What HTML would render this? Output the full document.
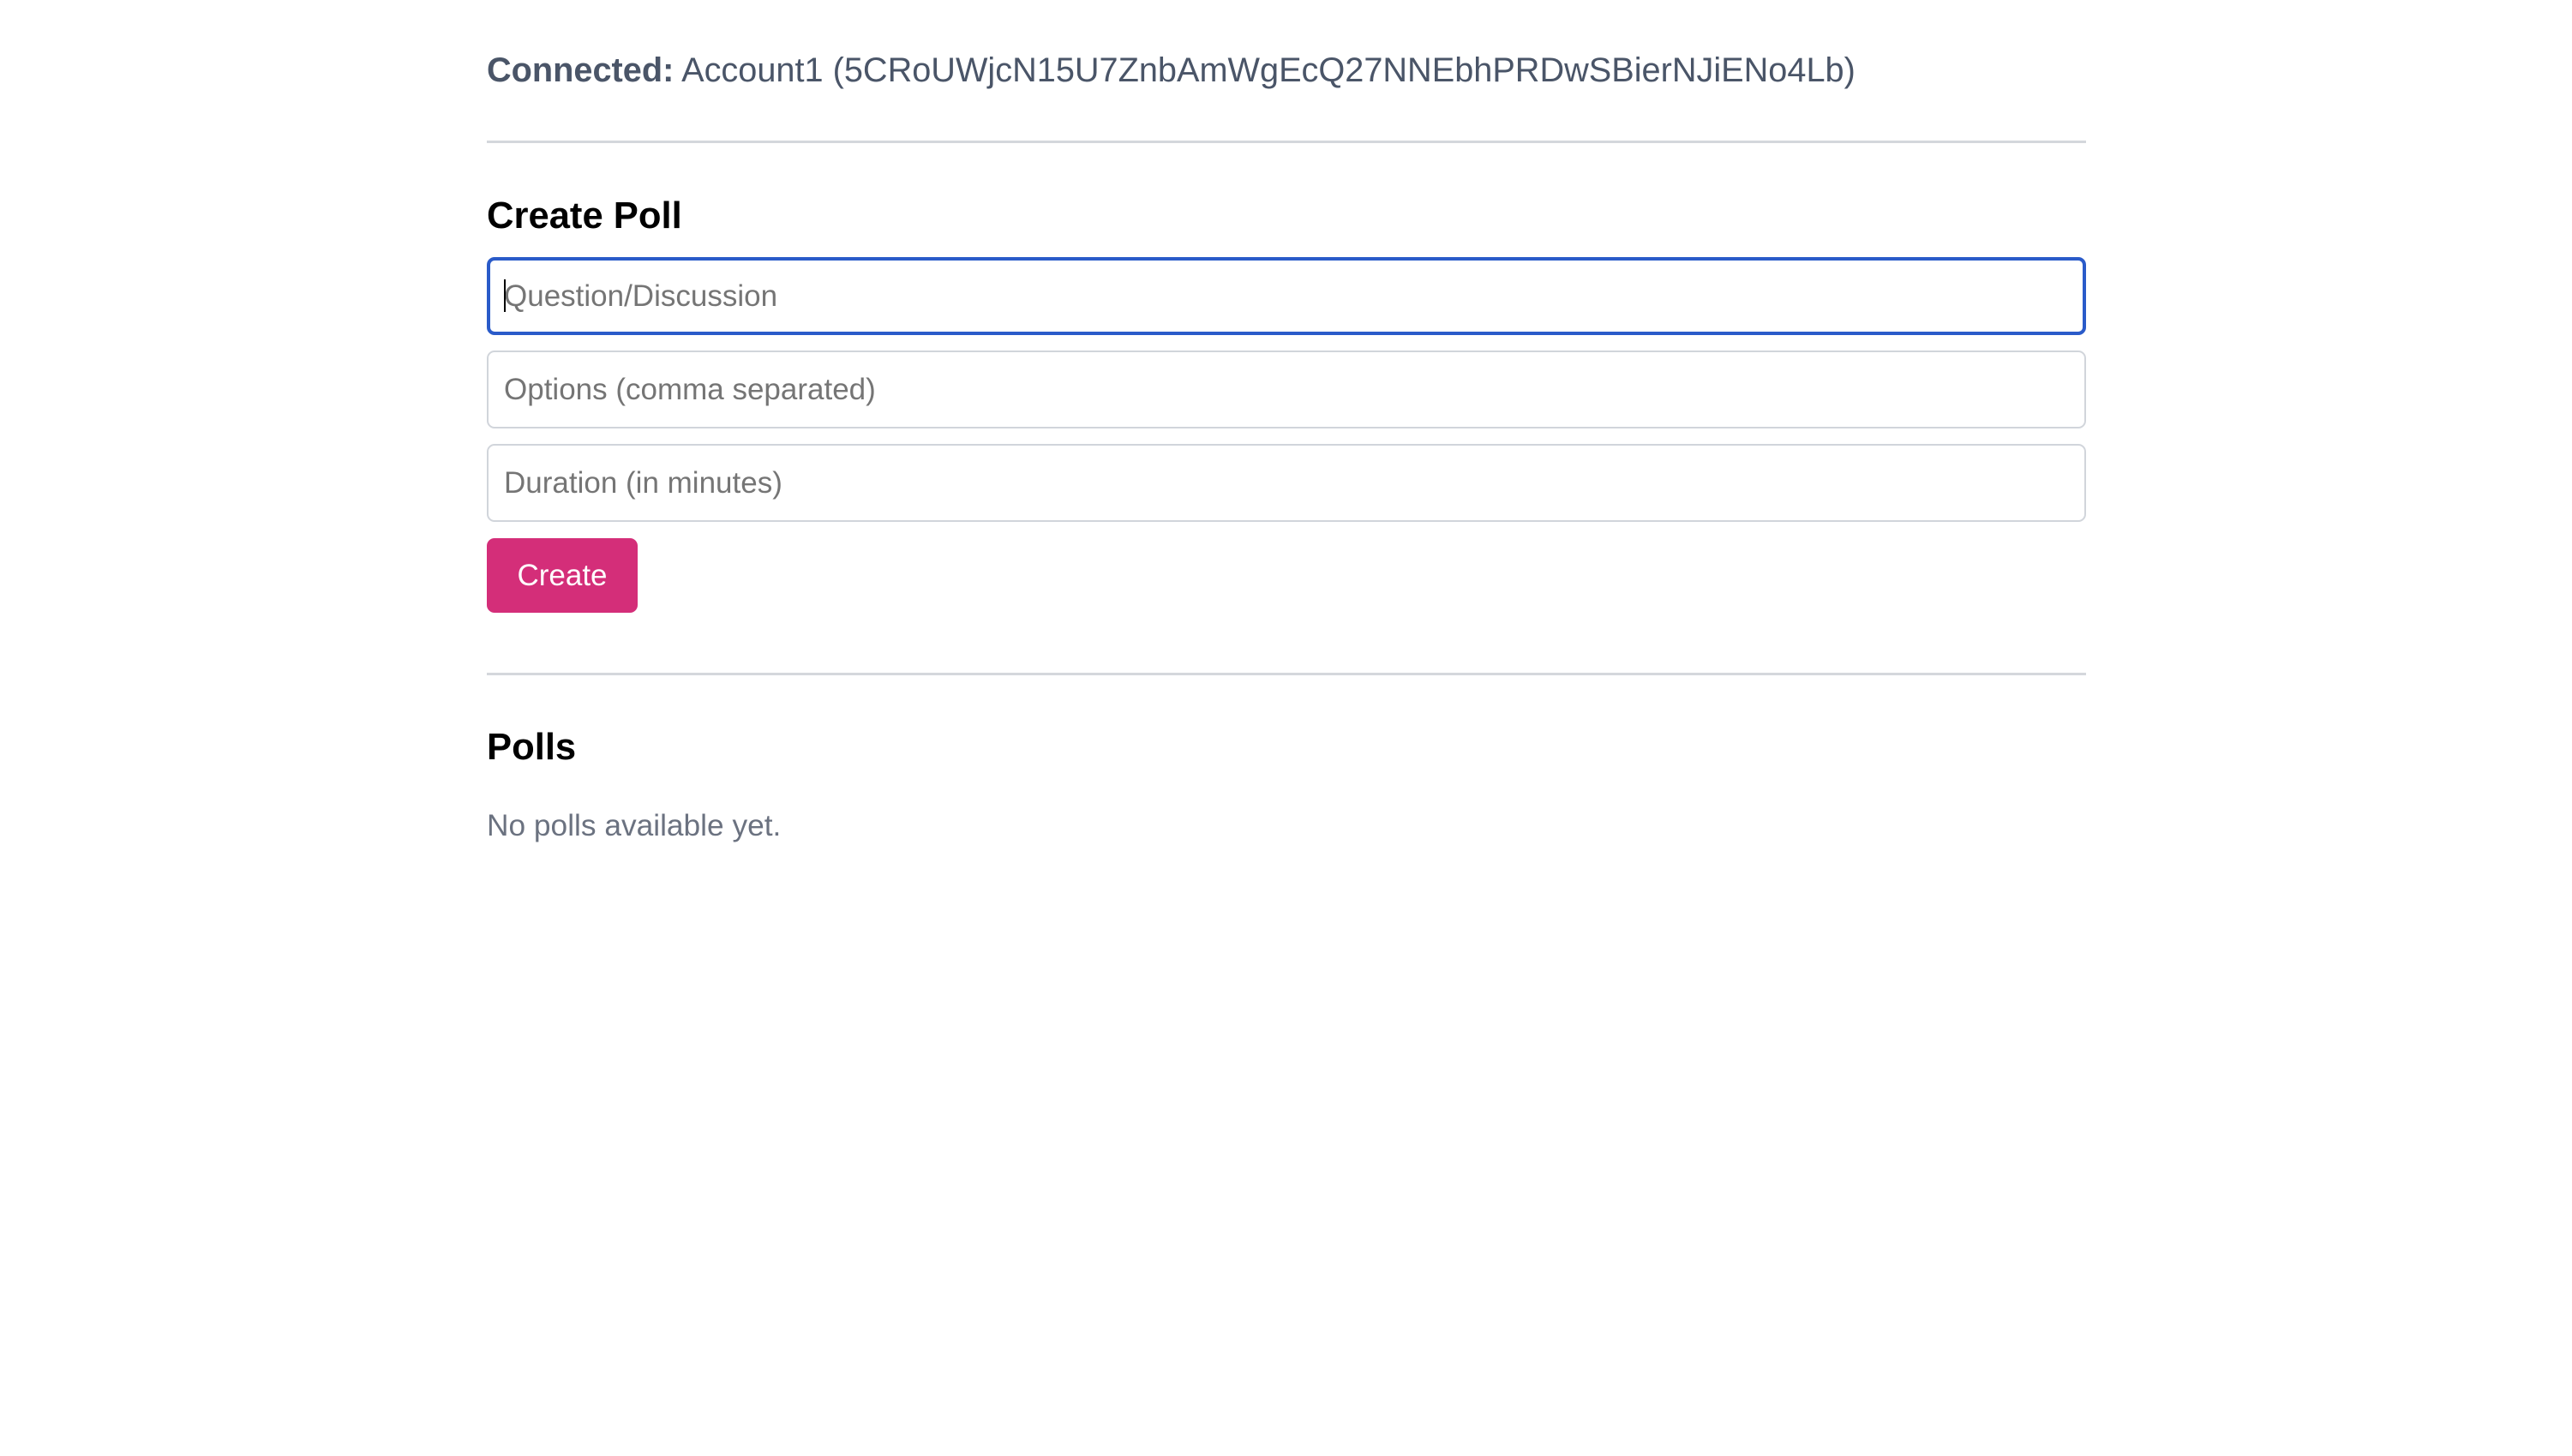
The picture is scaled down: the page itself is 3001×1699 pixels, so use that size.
<!DOCTYPE html>
<html><head><meta charset="utf-8"><style>
*{box-sizing:border-box;margin:0;padding:0}
body{width:3001px;height:1699px;background:#fff;font-family:"Liberation Sans",Arial,sans-serif;position:relative;overflow:hidden}
.a{position:absolute;left:568px;white-space:nowrap}
.conn{top:58px;font-size:39.7px;color:#4a5568;line-height:48px}
.hr{position:absolute;left:568px;width:1866px;height:3px;background:#d4d7dc}
h2{position:absolute;left:568px;font-size:43.6px;font-weight:bold;color:#000;line-height:50px}
.in{position:absolute;left:568px;width:1866px;height:91px;border:2px solid #d1d5db;border-radius:9px;font-size:35px;color:#757575;padding-left:18px;line-height:87px}
.in.f{border:4px solid #2a5bc9;line-height:83px;padding-left:16px}
.btn{position:absolute;left:568px;top:628px;width:176px;height:87px;background:#d42e79;border-radius:9px;color:#fff;font-size:35px;text-align:center;line-height:87px}
.muted{top:942px;font-size:35.3px;color:#6b7280;line-height:44px}
</style></head><body>
<div class="a conn"><b>Connected:</b> Account1 (5CRoUWjcN15U7ZnbAmWgEcQ27NNEbhPRDwSBierNJiENo4Lb)</div>
<div class="hr" style="top:164px"></div>
<h2 style="top:227px">Create Poll</h2>
<div class="in f" style="top:300px"><span style="display:inline-block;width:2px;height:38px;background:#000;vertical-align:middle;margin-right:-2px;position:relative;top:-3px"></span>Question/Discussion</div>
<div class="in" style="top:409px">Options (comma separated)</div>
<div class="in" style="top:518px">Duration (in minutes)</div>
<div class="btn">Create</div>
<div class="hr" style="top:785px"></div>
<h2 style="top:847px">Polls</h2>
<div class="a muted">No polls available yet.</div>
</body></html>
